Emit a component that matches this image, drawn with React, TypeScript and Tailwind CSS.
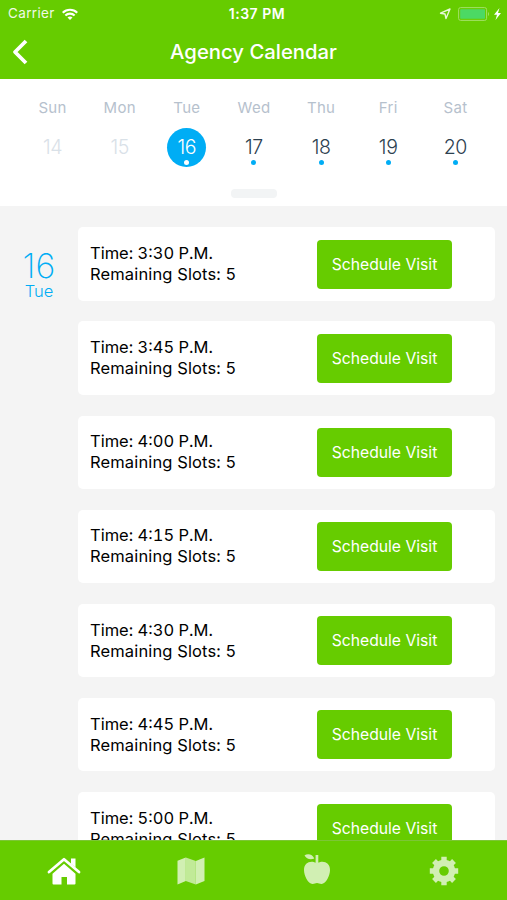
import React from 'react';

const days = [
  { name: 'Sun', date: 14, disabled: true },
  { name: 'Mon', date: 15, disabled: true },
  { name: 'Tue', date: 16, selected: true },
  { name: 'Wed', date: 17 },
  { name: 'Thu', date: 18 },
  { name: 'Fri', date: 19 },
  { name: 'Sat', date: 20 },
];

const slots = ['3:30', '3:45', '4:00', '4:15', '4:30', '4:45', '5:00'];

const StatusBar = () => (
  <div className="grid h-[27px] grid-cols-3 items-center pt-px text-[13.5px] leading-none">
    <div className="flex items-center gap-[6px] pl-[8px]">
      <span className="tracking-[0.35px] opacity-90">Carrier</span>
      <svg width="18" height="13" viewBox="0 0 18 14" fill="none" stroke="currentColor" strokeWidth="2.3">
        <path d="M1.2 5.1C5.6 0.8 12.4 0.8 16.8 5.1" />
        <path d="M4 8.1C6.8 5.4 11.2 5.4 14 8.1" />
        <path d="M9 13L6.3 10.3C7.8 8.9 10.2 8.9 11.7 10.3Z" fill="currentColor" stroke="none" />
      </svg>
    </div>
    <div className="pl-[7px] text-center text-[14px] font-semibold tracking-[0.5px]">1:37 PM</div>
    <div className="flex items-center justify-end pr-[6px]">
      <svg width="12" height="12" viewBox="0 0 12 12" fill="none" stroke="currentColor" strokeWidth="1.4" strokeLinejoin="round" className="mr-[7px] opacity-85">
        <path d="M11 1L7 10.5L6 6L1.5 5.2Z" />
      </svg>
      <svg width="32" height="14" viewBox="0 0 32 14" className="mr-[4px]">
        <rect x="0.6" y="0.6" width="28" height="12.8" rx="2" fill="none" stroke="#a3e066" />
        <rect x="2.2" y="2.2" width="24.8" height="9.6" rx="0.8" fill="#4cd964" />
        <path d="M30 5v4c1.4-.6 1.4-3.4 0-4z" fill="#a3e066" />
      </svg>
      <svg width="7" height="12" viewBox="0 0 7 12" fill="currentColor">
        <path d="M5.5 0L0 6.8h3L1.5 12L7 5H4z" />
      </svg>
    </div>
  </div>
);

const Header = () => (
  <header className="h-[79px] shrink-0 bg-[#66cc00] text-white">
    <StatusBar />
    <div className="grid h-[50px] grid-cols-[40px_1fr_40px] items-center">
      <svg width="16" height="26" viewBox="0 0 16 26" fill="none" stroke="currentColor" strokeWidth="3.8" strokeLinejoin="round" className="ml-[12px]">
        <path d="M14 2L3 13L14 24" />
      </svg>
      <h1 className="text-center text-[20.3px] font-medium leading-none">Agency Calendar</h1>
    </div>
  </header>
);

const WeekStrip = () => (
  <section className="flex h-[127px] shrink-0 flex-col items-center bg-white pt-[20px]">
    <div className="grid w-full grid-cols-7 pl-[19px] pr-[18px]">
      {days.map((day) => (
        <div key={day.name} className="flex flex-col items-center">
          <span className="text-[15px] leading-[18px] tracking-[0.3px] text-[#b6c1cd]">{day.name}</span>
          <div
            className={`mt-[10.5px] flex h-[39px] w-[39px] flex-col items-center rounded-full pt-[9.5px] text-[19.5px] leading-[20px] tracking-[-0.3px] font-light ${
              day.selected ? 'bg-[#00adf5] text-white' : day.disabled ? 'text-[#d9e1e8]' : 'text-[#2d4150]'
            }`}
          >
            {day.date}
            {!day.disabled && (
              <span className={`mt-[3px] h-[5px] w-[5px] rounded-full ${day.selected ? 'bg-white' : 'bg-[#00adf5]'}`} />
            )}
          </div>
        </div>
      ))}
    </div>
    {/* Knob */}
    <div className="mt-[22px] h-[9px] w-[46px] rounded-[4px] bg-[#f2f4f5]" />
  </section>
);

const SlotCard = ({ time }: { time: string }) => (
  <div className="flex h-[73.7px] shrink-0 items-center rounded-[5px] bg-white pl-[12px]">
    <div className="w-[227px] text-[16.5px] leading-[21px] text-black tabular-nums">
      <p>Time: {time} P.M.</p>
      <p className="tracking-[0.14px]">Remaining Slots: 5</p>
    </div>
    <button className="h-[49px] w-[135px] rounded-[4px] bg-[#66cc00] pt-px text-[15.7px] text-white">Schedule Visit</button>
  </div>
);

const Agenda = () => (
  <main className="flex min-h-0 flex-1 overflow-hidden bg-[#f4f4f4]">
    <div className="flex w-[78px] shrink-0 flex-col items-center pt-[45px] text-[#00adf5]">
      <span className="text-[34px] leading-[30px] font-extralight">16</span>
      <span className="text-[16.5px] leading-[20px] font-light">Tue</span>
    </div>
    <div className="flex flex-1 flex-col gap-[20.4px] pt-[21.4px] pr-[12px]">
      {slots.map((time) => (
        <SlotCard key={time} time={time} />
      ))}
    </div>
  </main>
);

const TabBar = () => (
  <nav className="grid h-[60px] shrink-0 grid-cols-4 place-items-center border-t border-[#7cc636] bg-[#66cc00] text-white">
    {/* Home */}
    <svg width="34" height="28" viewBox="0 0 34 28" fill="currentColor" className="ml-px">
      <path d="M17 6.8L28.5 16.8V26.5Q28.5 27.5 27.5 27.5H20V20h-5.5v7.5H6.5Q5.5 27.5 5.5 26.5V16.8Z" />
      <path d="M2 15L17 2.3L32 15" fill="none" stroke="currentColor" strokeWidth="2.8" strokeLinecap="round" strokeLinejoin="round" />
      <path d="M24 1.5h4.5v9L24 6.8z" />
    </svg>
    {/* Map */}
    <svg width="28" height="28" viewBox="0 0 28 28" fill="currentColor" className="ml-px opacity-70">
      <path d="M0.5 3.8L8.8 0.5V24L0.5 27.5Z" />
      <path d="M8.8 0.5L18.8 4V27.5L8.8 24Z" opacity="0.85" />
      <path d="M18.8 4L27.5 0.5V24L18.800 27.5Z" />
    </svg>
    {/* Nutrition */}
    <svg width="28" height="32" viewBox="0 0 28 32" fill="currentColor" className="-mt-[4px] opacity-70">
      <path d="M14 10.5C19.5 7 27 9 27 17C27 22.5 23 31 18.5 31C16.500 31 15.5 30 14 30S11.5 31 9.500 31C5 31 1 22.5 1 17C1 9 8.5 7 14 10.5ZM12.600 2h2.700v9h-2.700z" />
      <path d="M1.500 2.200C5 0.300 9.500 1 11.300 5.600C7.500 7.200 3.200 6.200 1.500 2.200Z" />
    </svg>
    {/* Settings */}
    <svg width="30" height="30" viewBox="0 0 30 30" fill="none" stroke="currentColor" className="opacity-70">
      <circle cx="15" cy="15" r="8" strokeWidth="6.4" />
      <path
        d="M15 0.8V6M15 24v5.2M0.8 15H6M24 15h5.2M5 5l3.6 3.6M21.4 21.4L25 25M5 25l3.600-3.600M21.4 8.6L25 5"
        strokeWidth="5.4"
      />
    </svg>
  </nav>
);

const App = () => {
  return (
    <div className="flex h-[900px] w-[507px] flex-col overflow-hidden font-['Inter',sans-serif]">
      <Header />
      <WeekStrip />
      <Agenda />
      <TabBar />
    </div>
  );
};

export default App;
